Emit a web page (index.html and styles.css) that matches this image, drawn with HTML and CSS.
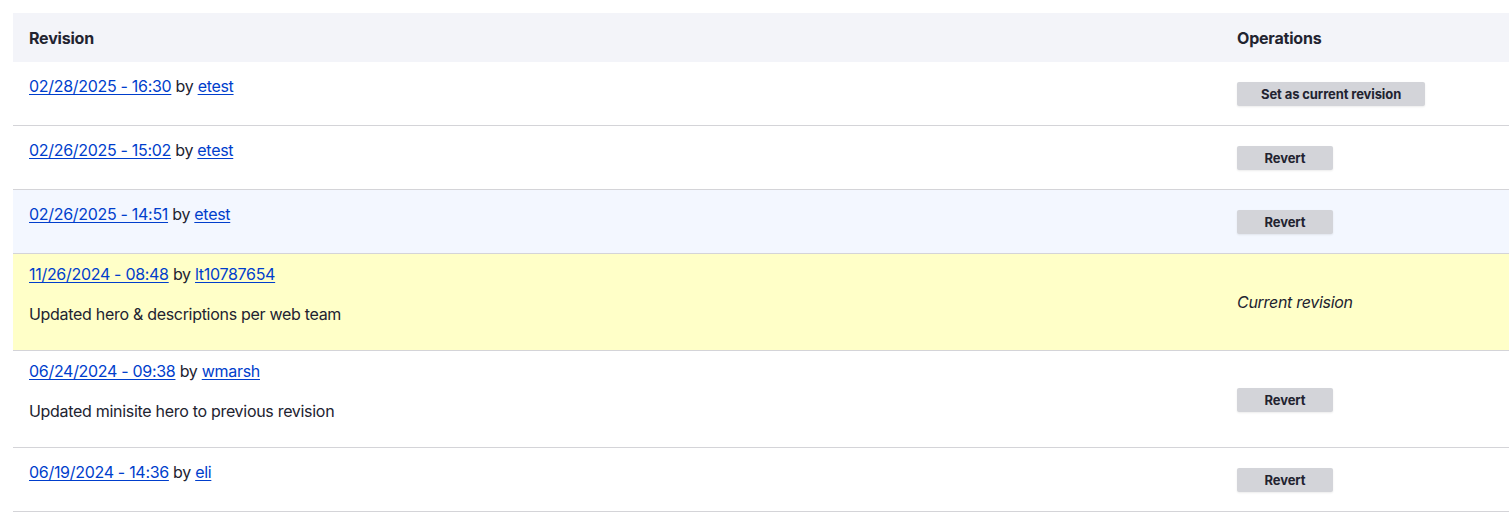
FILE: index.html
```html
<!DOCTYPE html>
<html lang="en">
  <head>
    <meta charset="UTF-8" />
    <meta name="viewport" content="width=device-width, initial-scale=1.0" />
    <title>Revisions</title>
    <link rel="stylesheet" href="styles.css">
  </head>
  <body>
    <div class="revisions-page">
      <table class="revisions-table">
        <thead>
          <tr>
            <th class="revision-col">Revision</th>
            <th class="operations-col">Operations</th>
          </tr>
        </thead>
        <tbody>
          <tr>
            <td class="revision-cell">
              <div class="revision-meta"><a href="#">02/28/2025 - 16:30</a> by <a href="#">etest</a></div>
            </td>
            <td class="operations-cell"><button class="revision-btn">Set as current revision</button></td>
          </tr>
          <tr>
            <td class="revision-cell">
              <div class="revision-meta"><a href="#">02/26/2025 - 15:02</a> by <a href="#">etest</a></div>
            </td>
            <td class="operations-cell"><button class="revision-btn">Revert</button></td>
          </tr>
          <tr class="hover">
            <td class="revision-cell">
              <div class="revision-meta"><a href="#">02/26/2025 - 14:51</a> by <a href="#">etest</a></div>
            </td>
            <td class="operations-cell"><button class="revision-btn">Revert</button></td>
          </tr>
          <tr class="current">
            <td class="revision-cell">
              <div class="revision-meta"><a href="#">11/26/2024 - 08:48</a> by <a href="#">lt10787654</a></div>
              <p class="revision-log">Updated hero &amp; descriptions per web team</p>
            </td>
            <td class="operations-cell"><em class="current-label">Current revision</em></td>
          </tr>
          <tr>
            <td class="revision-cell">
              <div class="revision-meta"><a href="#">06/24/2024 - 09:38</a> by <a href="#">wmarsh</a></div>
              <p class="revision-log">Updated minisite hero to previous revision</p>
            </td>
            <td class="operations-cell"><button class="revision-btn">Revert</button></td>
          </tr>
          <tr>
            <td class="revision-cell">
              <div class="revision-meta"><a href="#">06/19/2024 - 14:36</a> by <a href="#">eli</a></div>
            </td>
            <td class="operations-cell"><button class="revision-btn">Revert</button></td>
          </tr>
        </tbody>
      </table>
    </div>
  </body>
</html>
```

FILE: styles.css
```css
* {
  box-sizing: border-box;
}
body {
  margin: 0;
  background: #fff;
  color: #222330;
  font-family: Inter, "Noto Sans", sans-serif;
  font-size: 16px;
  line-height: 24px;
  letter-spacing: -0.3px;
}
.revisions-page {
  padding: 13px 0 0 13px;
}
.revisions-table {
  width: 100%;
  border-collapse: collapse;
}
.revisions-table th {
  height: 49px;
  padding: 0 16px;
  background: #f3f4f9;
  text-align: left;
  font-size: 16px;
  font-weight: 700;
  letter-spacing: -0.2px;
  vertical-align: middle;
}
.operations-col {
  width: 288px;
}
.revisions-table td {
  padding: 8px 16px;
  border-bottom: 1px solid #d4d4d8;
  vertical-align: middle;
}
.revisions-table tr.hover td {
  background: #f3f7ff;
}
.revisions-table tr.current td {
  background: #ffffc8;
}
.revision-cell::after {
  content: "";
  display: block;
  height: 16px;
}
.revision-meta a {
  color: #003ecc;
  text-decoration: underline;
  text-underline-offset: 2px;
}
.revision-log {
  margin: 16px 0 0;
}
.revision-btn {
  display: block;
  min-width: 96px;
  height: 24px;
  margin: 12px 0 11px;
  padding: 0 24px;
  border: 0;
  border-radius: 2px;
  background: #d3d4d9;
  box-shadow: 0 1px 2px rgba(0, 0, 0, 0.08);
  color: #222330;
  font-family: Inter, "Noto Sans", sans-serif;
  font-size: 13px;
  font-weight: 700;
  line-height: 24px;
  letter-spacing: -0.1px;
  cursor: pointer;
}
.current-label {
  font-style: italic;
}
```
